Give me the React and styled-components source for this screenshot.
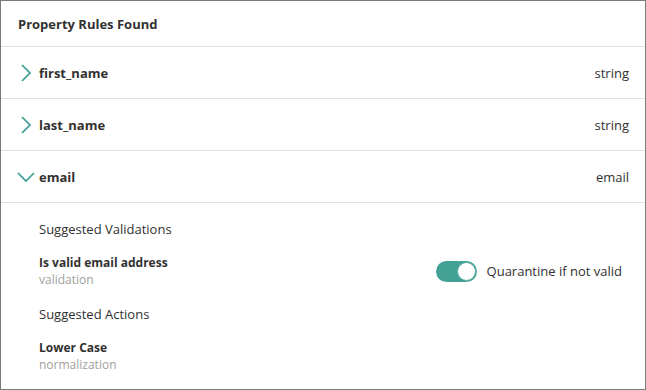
import styled, { createGlobalStyle } from "styled-components";

const GlobalStyle = createGlobalStyle`
  html, body {
    margin: 0;
    padding: 0;
    background: #ffffff;
  }
  body {
    font-family: "Open Sans", "Noto Sans", sans-serif;
    color: #323130;
  }
`;

const properties = [
  { name: "first_name", type: "string", open: false },
  { name: "last_name", type: "string", open: false },
  { name: "email", type: "email", open: true },
];

function Chevron({ open }) {
  if (open) {
    return (
      <ChevronBox>
        <svg width="18" height="18" viewBox="0 0 18 18">
          <path
            d="M1 5 L9 13 L17 5"
            fill="none"
            stroke="#3a9b91"
            strokeWidth="1.7"
          />
        </svg>
      </ChevronBox>
    );
  }
  return (
    <ChevronBox>
      <svg width="18" height="18" viewBox="0 0 18 18">
        <path
          d="M5 1 L13 9 L5 17"
          fill="none"
          stroke="#3a9b91"
          strokeWidth="1.7"
        />
      </svg>
    </ChevronBox>
  );
}

export default function App() {
  return (
    <>
      <GlobalStyle />
      <StyledPanel>
        <StyledHeader>Property Rules Found</StyledHeader>
        {properties.map((p) => (
          <div key={p.name}>
            <StyledRow>
              <Chevron open={p.open} />
              <StyledName>{p.name}</StyledName>
              <StyledType>{p.type}</StyledType>
            </StyledRow>
            {p.open ? (
              <StyledDetails>
                <StyledSection>Suggested Validations</StyledSection>
                <StyledRule>
                  <StyledRuleText>
                    <StyledRuleName>Is valid email address</StyledRuleName>
                    <StyledRuleKind>validation</StyledRuleKind>
                  </StyledRuleText>
                  <StyledToggleLabel>
                    <StyledToggle $on>
                      <StyledThumb $on />
                    </StyledToggle>
                    Quarantine if not valid
                  </StyledToggleLabel>
                </StyledRule>
                <StyledSection>Suggested Actions</StyledSection>
                <StyledRule>
                  <StyledRuleText>
                    <StyledRuleName>Lower Case</StyledRuleName>
                    <StyledRuleKind>normalization</StyledRuleKind>
                  </StyledRuleText>
                </StyledRule>
              </StyledDetails>
            ) : null}
          </div>
        ))}
      </StyledPanel>
    </>
  );
}

const StyledPanel = styled.div`
  width: 646px;
  height: 390px;
  box-sizing: border-box;
  border: 1px solid #7a7a7a;
  background: #ffffff;
  overflow: hidden;
`;

const StyledHeader = styled.div`
  height: 45px;
  display: flex;
  align-items: center;
  padding-left: 17px;
  font-size: 13px;
  font-weight: 700;
  border-bottom: 1px solid #e1dfdd;
`;

const StyledRow = styled.div`
  height: 51px;
  display: flex;
  align-items: center;
  padding: 0 16px 0 16px;
  border-bottom: 1px solid #e1dfdd;
`;

const ChevronBox = styled.span`
  width: 20px;
  height: 18px;
  display: flex;
  align-items: center;
`;

const StyledName = styled.span`
  margin-left: 2px;
  font-size: 13px;
  font-weight: 700;
  flex: 1;
`;

const StyledType = styled.span`
  font-size: 13px;
`;

const StyledDetails = styled.div`
  padding: 17px 23px 0 38px;
  display: flex;
  flex-direction: column;
`;

const StyledSection = styled.div`
  font-size: 13px;
  line-height: 18px;
  margin-bottom: 16px;
`;

const StyledRule = styled.div`
  display: flex;
  align-items: center;
  justify-content: space-between;
  margin-bottom: 17px;
`;

const StyledRuleText = styled.div`
  display: flex;
  flex-direction: column;
`;

const StyledRuleName = styled.span`
  font-size: 12px;
  font-weight: 700;
  line-height: 17px;
`;

const StyledRuleKind = styled.span`
  font-size: 12px;
  line-height: 17px;
  color: #a19f9d;
`;

const StyledToggleLabel = styled.div`
  display: flex;
  align-items: center;
  gap: 10px;
  font-size: 13px;
`;

const StyledToggle = styled.span`
  width: 41px;
  height: 21px;
  box-sizing: border-box;
  border-radius: 11px;
  background: ${(p) => (p.$on ? "#43a095" : "#ffffff")};
  display: flex;
  align-items: center;
  justify-content: ${(p) => (p.$on ? "flex-end" : "flex-start")};
  padding: 1px;
`;

const StyledThumb = styled.span`
  width: 19px;
  height: 19px;
  box-sizing: border-box;
  border-radius: 50%;
  background: #ffffff;
  border: 1px solid #5aaea4;
`;
